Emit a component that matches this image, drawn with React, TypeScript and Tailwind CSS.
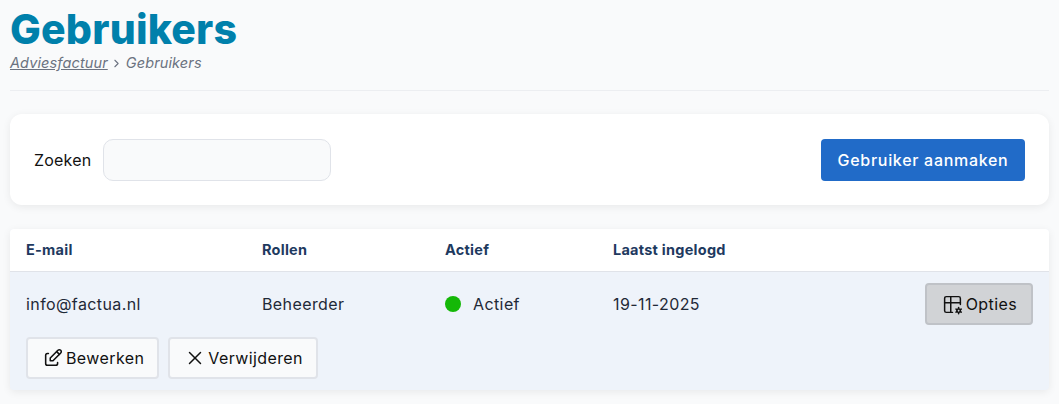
import type { ReactNode } from "react";
import { TbChevronRight, TbEdit, TbTableOptions, TbX } from "react-icons/tb";

const font = "font-['Inter','Noto_Sans',sans-serif]";
const columns = "grid-cols-[236px_183px_168px_1fr]";

function GhostButton({ icon, label }: { icon: ReactNode; label: string }) {
  return (
    <button className="flex h-[42px] items-center gap-[2px] rounded-[4px] border-2 border-[#e0e3e9] bg-[#f9fafb] pr-[13px] pl-[14px] text-[16px] tracking-[0.4px] text-[#111]">
      {icon}
      {label}
    </button>
  );
}

export default function App() {
  return (
    <div className={`${font} h-[404px] overflow-hidden bg-[#f9fafb] px-[10px]`}>
      <h1 className="pt-[7px] text-[41px] leading-[44px] font-extrabold tracking-[0.2px] text-[#0080ab]">
        Gebruikers
      </h1>
      <div className="mt-[3px] flex h-[18px] items-center text-[14.5px] tracking-[0.12px] text-[#6b7280] italic">
        <a className="underline">Adviesfactuur</a>
        <TbChevronRight className="mx-[2px] size-[13px]" />
        <span className="ml-[1px]">Gebruikers</span>
      </div>
      <div className="mt-[18px] h-px bg-[#eceef1]" />

      <div className="mt-[23px] flex h-[91px] items-center justify-between rounded-xl bg-white px-6 shadow-[0_2px_8px_rgba(0,0,0,0.07)]">
        <div className="flex items-center gap-3">
          <label className="text-[16px] tracking-[0.2px] text-[#111]">Zoeken</label>
          <input className="h-[42px] w-[228px] rounded-[10px] border border-[#e0e3e9] bg-[#f9fafb]" />
        </div>
        <button className="h-[42px] w-[204px] rounded-[4px] bg-[#216bc8] text-[16px] font-medium tracking-[0.7px] text-white">
          Gebruiker aanmaken
        </button>
      </div>

      <div className="mt-6 h-[161px] overflow-hidden rounded-[4px] bg-[#eef3fa] shadow-[0_2px_8px_rgba(0,0,0,0.07)]">
        <div className={`grid h-[43px] ${columns} items-center border-b border-[#e0e3e9] bg-white pl-4 text-[14.5px] font-bold tracking-[0.25px] text-[#1e3a5f]`}>
          <div>E-mail</div>
          <div>Rollen</div>
          <div>Actief</div>
          <div>Laatst ingelogd</div>
        </div>
        <div className={`grid h-[53px] ${columns} items-center pt-[11px] pr-4 pl-4 text-[16px] tracking-[0.4px] text-[#1f2937]`}>
          <div>info@factua.nl</div>
          <div>Beheerder</div>
          <div className="flex items-center gap-3">
            <span className="size-4 rounded-full bg-[#14b807]" />
            Actief
          </div>
          <div className="flex items-center justify-between">
            19-11-2025
            <button className="flex h-[42px] items-center gap-[3px] rounded-[4px] border-2 border-[#bfc2c7] bg-[#d1d3d6] pr-[14px] pl-[15px] text-[16px] tracking-[0.4px] text-[#111]">
              <TbTableOptions className="size-[21px]" strokeWidth={1.7} />
              Opties
            </button>
          </div>
        </div>
        <div className="mt-3 flex gap-[9px] pl-4">
          <GhostButton icon={<TbEdit className="size-[22px]" strokeWidth={1.7} />} label="Bewerken" />
          <GhostButton icon={<TbX className="size-[22px]" strokeWidth={1.6} />} label="Verwijderen" />
        </div>
      </div>
    </div>
  );
}
